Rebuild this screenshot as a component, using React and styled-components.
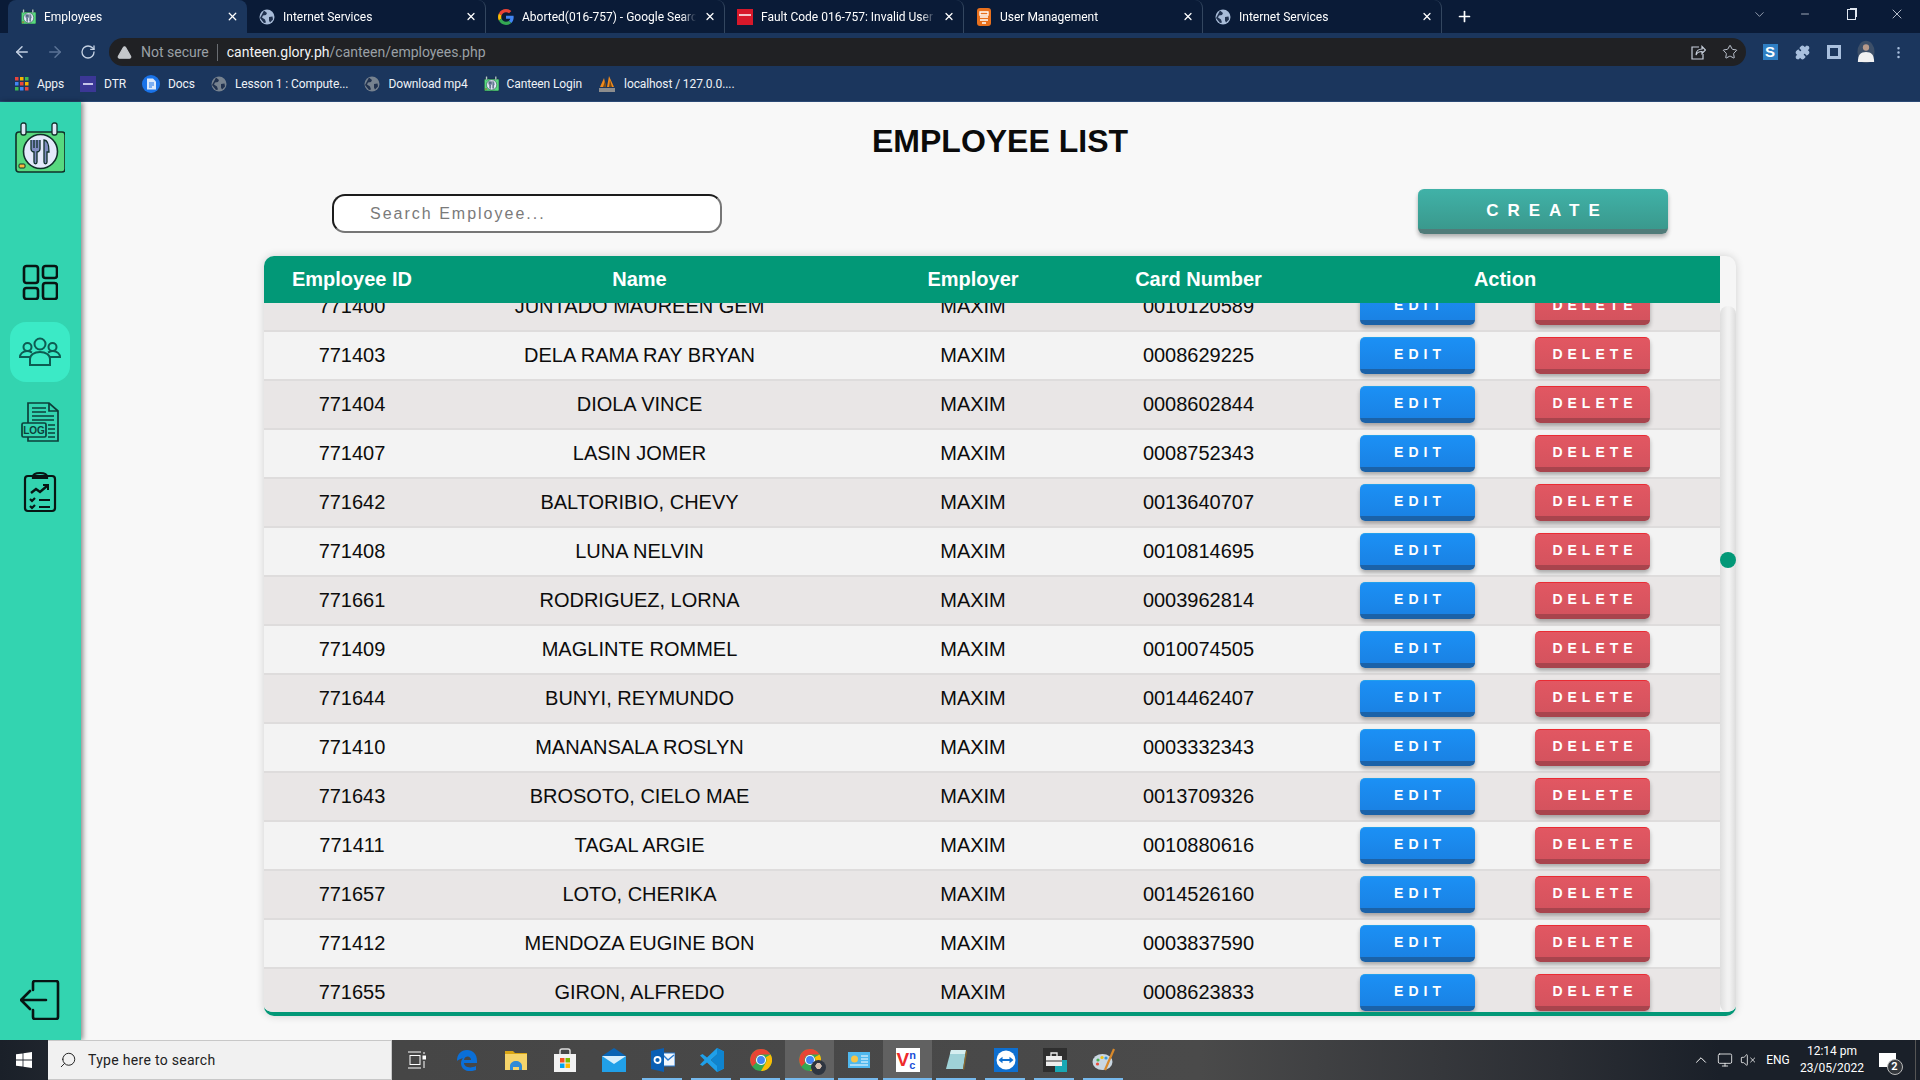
import React from 'react';
import styled, { createGlobalStyle } from 'styled-components';
import { ArrowLeft, ArrowRight, RotateCw, Star, Puzzle, MoreVertical, X, Plus, Minus, ChevronDown, ChevronUp, Monitor, VolumeX, Search, TriangleAlert } from 'lucide-react';

const employees = [
    ['771400', 'JUNTADO MAUREEN GEM', '0010120589'],
    ['771403', 'DELA RAMA RAY BRYAN', '0008629225'],
    ['771404', 'DIOLA VINCE', '0008602844'],
    ['771407', 'LASIN JOMER', '0008752343'],
    ['771642', 'BALTORIBIO, CHEVY', '0013640707'],
    ['771408', 'LUNA NELVIN', '0010814695'],
    ['771661', 'RODRIGUEZ, LORNA', '0003962814'],
    ['771409', 'MAGLINTE ROMMEL', '0010074505'],
    ['771644', 'BUNYI, REYMUNDO', '0014462407'],
    ['771410', 'MANANSALA ROSLYN', '0003332343'],
    ['771643', 'BROSOTO, CIELO MAE', '0013709326'],
    ['771411', 'TAGAL ARGIE', '0010880616'],
    ['771657', 'LOTO, CHERIKA', '0014526160'],
    ['771412', 'MENDOZA EUGINE BON', '0003837590'],
    ['771655', 'GIRON, ALFREDO', '0008623833'],
];

const GlobalStyle = createGlobalStyle`
    html, body { margin: 0; padding: 0; }
    body { font-family: "Liberation Sans", Arial, sans-serif; overflow: hidden; }
    * { box-sizing: border-box; }
`;

/* ---------- little drawings ---------- */

const CanteenLogo = ({ size = 50 }) => (
    <svg width={size} height={size * 1.04} viewBox="0 0 50 52">
        <rect x="1" y="10" width="49" height="40" rx="3" fill="#57d97f" stroke="#10302a" strokeWidth="1.6" />
        <rect x="6" y="1" width="5" height="12" rx="2" fill="#dfe6f5" stroke="#10302a" strokeWidth="1.3" />
        <rect x="37" y="1" width="5" height="12" rx="2" fill="#dfe6f5" stroke="#10302a" strokeWidth="1.3" />
        <circle cx="25.5" cy="29.5" r="17" fill="#e4e9fb" stroke="#10302a" strokeWidth="1.6" />
        <path d="M16 18v9c0 2 2 3 3 3v10c0 2.400 3 2.400 3 0V30c1 0 3-1 3-3v-9M19 18v8M22 18v8" fill="#7f8cc0" stroke="#10302a" strokeWidth="1.3" />
        <path d="M29 18c4 0 5 5 5 12h-2v10c0 2.400-3 2.400-3 0z" fill="#7f8cc0" stroke="#10302a" strokeWidth="1.3" />
        <rect x="4" y="42" width="6" height="4" rx="1" fill="#f6b73c" stroke="#10302a" strokeWidth="1" />
    </svg>
);

const DashboardIcon = () => (
    <svg width="36" height="36" viewBox="0 0 36 36" fill="none" stroke="#071513" strokeWidth="2.600">
        <rect x="2" y="2" width="14" height="17" rx="2.500" />
        <rect x="21" y="2" width="14" height="12" rx="2.500" />
        <rect x="2" y="24" width="14" height="11" rx="2.500" />
        <rect x="21" y="19" width="14" height="16" rx="2.500" />
    </svg>
);

const PeopleIcon = () => (
    <svg width="42" height="30" viewBox="0 0 42 30" fill="none" stroke="#0d5c52" strokeWidth="2">
        <circle cx="21" cy="7" r="5.500" />
        <circle cx="8.500" cy="10" r="4" />
        <circle cx="33.500" cy="10" r="4" />
        <path d="M11 28v-6c0-4 4-7 10-7s10 3 10 7v6z" />
        <path d="M11 20H1c0-3 3-6 7-6 2 0 3 .500 5 1.500M31 20h10c0-3-3-6-7-6-2 0-3 .500-5 1.500" />
    </svg>
);

const LogIcon = () => (
    <svg width="38" height="42" viewBox="0 0 38 42" fill="none" stroke="#0d3f3a" strokeWidth="1.700">
        <path d="M7 22V2h21l9 8v30H7v-4" />
        <path d="M28 2v8h9" />
        <path d="M11 7h14M11 11h14M11 15h22M11 19h22M27 24h7M27 28h7M27 32h7M27 36h7" />
        <rect x="1" y="22" width="24" height="14" rx="1.500" />
        <text x="13" y="33" textAnchor="middle" fontFamily="Liberation Sans, sans-serif" fontWeight="700" fontSize="10" fill="#0d3f3a" stroke="none">LOG</text>
    </svg>
);

const ClipboardIcon = () => (
    <svg width="34" height="42" viewBox="0 0 34 42" fill="none" stroke="#071513" strokeWidth="2.200">
        <rect x="2" y="5" width="30" height="35" rx="3" />
        <path d="M10 6c0-3 3-4 7-4s7 1 7 4v1H10z" />
        <path d="M8 22l5-4 4 3 7-6" strokeWidth="2.400" />
        <path d="M20 14h5v5" strokeWidth="2" />
        <path d="M7 28l2 2 3-3M7 35l2 2 3-3M16 29h11M16 36h11" />
    </svg>
);

const LogoutIcon = () => (
    <svg width="40" height="40" viewBox="0 0 40 40" fill="none" stroke="#071513" strokeWidth="2.600" strokeLinecap="round" strokeLinejoin="round">
        <path d="M13 10V3a2 2 0 0 1 2-2h21a2 2 0 0 1 2 2v34a2 2 0 0 1-2 2H15a2 2 0 0 1-2-2v-7" />
        <path d="M26 20H2M10 11l-9 9 9 9" />
    </svg>
);

const Globe = ({ color = '#a9bcd8' }) => (
    <svg width="16" height="16" viewBox="0 0 16 16">
        <circle cx="8" cy="8" r="7.500" fill={color} />
        <path d="M5 1.500l3 2.500-1 2-3 .500-1 2 3 2 1 3-2 .500-4-5zM10 8l3.500-.500.500 3-3 3-1-2z" fill="#21324f" />
    </svg>
);

const GoogleG = () => (
    <svg width="16" height="16" viewBox="0 0 48 48">
        <path fill="#EA4335" d="M24 9.500c3.540 0 6.710 1.220 9.210 3.600l6.850-6.850C35.900 2.380 30.470 0 24 0 14.620 0 6.510 5.380 2.560 13.220l7.980 6.190C12.430 13.720 17.740 9.500 24 9.500z" />
        <path fill="#4285F4" d="M46.980 24.550c0-1.570-.15-3.090-.38-4.550H24v9.020h12.940c-.58 2.960-2.260 5.480-4.780 7.180l7.730 6c4.510-4.180 7.090-10.360 7.090-17.650z" />
        <path fill="#FBBC05" d="M10.530 28.590c-.48-1.450-.76-2.990-.76-4.590s.27-3.140.76-4.590l-7.980-6.190C.92 16.460 0 20.120 0 24c0 3.880.92 7.540 2.560 10.780l7.970-6.190z" />
        <path fill="#34A853" d="M24 48c6.480 0 11.930-2.130 15.890-5.810l-7.730-6c-2.150 1.450-4.920 2.300-8.160 2.300-6.260 0-11.570-4.220-13.470-9.910l-7.980 6.190C6.510 42.620 14.620 48 24 48z" />
    </svg>
);

const XeroxFav = () => (
    <svg width="16" height="16" viewBox="0 0 16 16">
        <rect width="16" height="16" fill="#d7182a" />
        <rect x="2" y="5" width="12" height="2" fill="#f4c3c8" />
    </svg>
);

const OrangeDocFav = () => (
    <svg width="16" height="18" viewBox="0 0 16 18">
        <rect x="1" y="0" width="14" height="18" rx="3" fill="#e8701d" />
        <path d="M4 4h8v3H4zM4 9h8M4 12h8M6 15h4" stroke="#fff" strokeWidth="1.300" fill="none" />
    </svg>
);

const AppsGrid = () => {
    const colors = ['#e8453c', '#f4b400', '#3cba54', '#4285f4', '#e8453c', '#f4b400', '#3cba54', '#4285f4', '#e8453c'];
    return (
        <svg width="14" height="14" viewBox="0 0 14 14">
            {colors.map((c, i) => <rect key={i} x={(i % 3) * 5} y={Math.floor(i / 3) * 5} width="3.500" height="3.500" fill={c} />)}
        </svg>
    );
};

const DtrFav = () => (
    <svg width="16" height="16" viewBox="0 0 16 16">
        <rect width="16" height="16" fill="#3b3796" />
        <rect x="3" y="7" width="10" height="2" fill="#c6c4ea" />
    </svg>
);

const DocsFav = () => (
    <svg width="18" height="18" viewBox="0 0 18 18">
        <circle cx="9" cy="9" r="9" fill="#1a73e8" />
        <path d="M5 3.500h6l3 3v8H5z" fill="#dce9fb" />
        <path d="M7 8h5M7 10h5M7 12h3" stroke="#1a73e8" strokeWidth="1" />
    </svg>
);

const XamppFav = () => (
    <svg width="18" height="18" viewBox="0 0 18 18">
        <path d="M2 12L6 3l2 9zM9 12l2-11 5 11z" fill="#f08a1d" />
        <path d="M5 12l2-6 1 6zM11 12l1-7 2 7z" fill="#7c4b12" />
        <rect x="1" y="13" width="16" height="4" fill="#8d8d8d" />
    </svg>
);

const ShareIcon = () => (
    <svg width="16" height="16" viewBox="0 0 16 16" fill="none" stroke="#c8d0dc" strokeWidth="1.200">
        <path d="M9 3H2v12h11v-5" />
        <path d="M6 11c0-4 3-6 6-6V2.500L15.500 6 12 9.500V7.500c-3 0-5 1-6 3.500z" />
    </svg>
);

const SidePanelIcon = () => (
    <svg width="14" height="14" viewBox="0 0 14 14" fill="none" stroke="#a9c0de" strokeWidth="3">
        <rect x="1.500" y="1.500" width="11" height="11" />
    </svg>
);

const Avatar = () => (
    <svg width="18" height="26" viewBox="0 0 20 26">
        <ellipse cx="10" cy="13" rx="9.500" ry="12.500" fill="#3d4f68" />
        <circle cx="10" cy="8" r="3.500" fill="#b89a8a" />
        <path d="M1 24c0-8 3-11 9-11s9 3 9 11z" fill="#f1f1f1" />
    </svg>
);

const WindowsLogo = () => (
    <svg width="16" height="16" viewBox="0 0 16 16" fill="#fff">
        <path d="M0 2.300l6.600-.9v6.200H0zM7.400 1.300L16 0v7.600H7.400zM0 8.400h6.600v6.200L0 13.700zM7.400 8.400H16V16l-8.600-1.200z" />
    </svg>
);

const TaskViewIcon = () => (
    <svg width="18" height="18" viewBox="0 0 18 18" fill="none" stroke="#fff" strokeWidth="1">
        <path d="M0 1h13M0 17h13" />
        <rect x="2" y="4.500" width="10" height="9" />
        <rect x="15" y="5" width="2.500" height="3" fill="#fff" />
        <path d="M16 1v2M16 10v7" />
    </svg>
);

const EdgeIcon = () => (
    <svg width="22" height="22" viewBox="0 0 22 22" fill="none">
        <path d="M1 12C1 5 5 1 11 1c6 0 10 4 10 11v2H8c0 4 6 6 12 3v4c-8 3-15 0-15-7 0-2 1-4 2-5-3 1-5 2-6 3zm7-1h7c0-4-6-5-7 0z" fill="#0a6fd8" fillRule="evenodd" />
    </svg>
);

const FolderIcon = () => (
    <svg width="22" height="20" viewBox="0 0 22 20">
        <path d="M0 1h8l2 2h12v3H0z" fill="#d9a514" />
        <rect y="4" width="22" height="16" fill="#f5d46a" />
        <path d="M5 20v-4c0-3 3-5 6-5s6 2 6 5v4h-3v-3H8v3z" fill="#2f8ad6" />
    </svg>
);

const StoreIcon = () => (
    <svg width="24" height="24" viewBox="0 0 24 24">
        <path d="M7 7V3c0-1 1-2 2-2h6c1 0 2 1 2 2v4" fill="none" stroke="#ddd" strokeWidth="1.500" />
        <rect x="1" y="6" width="22" height="18" fill="#f2f2f2" />
        <rect x="7" y="10" width="4.500" height="4.500" fill="#f25022" />
        <rect x="12.500" y="10" width="4.500" height="4.500" fill="#7fba00" />
        <rect x="7" y="15.500" width="4.500" height="4.500" fill="#00a4ef" />
        <rect x="12.500" y="15.500" width="4.500" height="4.500" fill="#ffb900" />
    </svg>
);

const MailIcon = () => (
    <svg width="24" height="24" viewBox="0 0 24 24">
        <path d="M0 8l12-8 12 8v2H0z" fill="#0a64b4" />
        <rect y="8" width="24" height="16" fill="#21a0e8" />
        <path d="M0 8h24L12 16z" fill="#d8effc" />
    </svg>
);

const OutlookIcon = () => (
    <svg width="24" height="24" viewBox="0 0 24 24">
        <rect x="11" y="5" width="13" height="13" fill="#f2f7fc" stroke="#2a7ad0" />
        <path d="M12 7l5 5 6-5" fill="none" stroke="#2a7ad0" strokeWidth="1.400" />
        <path d="M0 3l13-3v24L0 21z" fill="#0a5fb4" />
        <circle cx="6.500" cy="12" r="3" fill="none" stroke="#fff" strokeWidth="1.800" />
    </svg>
);

const VsCodeIcon = () => (
    <svg width="24" height="24" viewBox="0 0 24 24">
        <path d="M17 0l7 3.500v17L17 24 7 14.500 2.500 18 0 16.500 4.500 12 0 7.500 2.500 6 7 9.500zM17 6.500L11 12l6 5.500z" fill="#1fa0ea" fillRule="evenodd" />
        <path d="M17 0v6.500L11 12l6 5.500V24l7-3.500v-17z" fill="#0f84cf" fillRule="evenodd" />
    </svg>
);

const ChromeIcon = ({ size = 22 }) => (
    <svg width={size} height={size} viewBox="0 0 24 24">
        <circle cx="12" cy="12" r="12" fill="#34a853" />
        <path d="M12 0a12 12 0 0 1 10.400 6H12a6 6 0 0 0-5.200 3L3.300 3.500A12 12 0 0 1 12 0z" fill="#ea4335" />
        <path d="M22.400 6A12 12 0 0 1 12 24l5.200-9A6 6 0 0 0 17.200 9z" fill="#fbbc05" />
        <path d="M3.300 3.500L6.800 9a6 6 0 0 0 0 6l-4.200 4A12 12 0 0 1 3.300 3.500z" fill="#ea4335" />
        <circle cx="12" cy="12" r="5.500" fill="#fff" />
        <circle cx="12" cy="12" r="4.300" fill="#4285f4" />
    </svg>
);

const ChromeProfileIcon = () => (
    <TaskAvatar>
        <ChromeIcon />
        <ProfileBadge />
    </TaskAvatar>
);

const PanelIcon = () => (
    <svg width="22" height="16" viewBox="0 0 22 16">
        <rect width="22" height="16" fill="#4fb8ee" />
        <circle cx="6.500" cy="7" r="3.500" fill="#f6c445" />
        <path d="M13 4h7M13 7h7M13 10h7M2 13h18" stroke="#fff" strokeWidth="1" />
    </svg>
);

const VncIcon = () => (
    <VncTile>
        <VncV>V</VncV>
        <VncText>n<br />c</VncText>
    </VncTile>
);

const NotepadIcon = () => (
    <svg width="24" height="24" viewBox="0 0 24 24">
        <path d="M6 2h15l-3 19H1z" fill="#9fd2d8" />
        <path d="M6 2h15l-1 4H5z" fill="#d5eef0" />
        <path d="M21 2l1 2-3 18-1-1z" fill="#8d6b2c" />
    </svg>
);

const TeamViewerIcon = () => (
    <svg width="24" height="24" viewBox="0 0 24 24">
        <rect width="24" height="24" fill="#0e6fd0" />
        <circle cx="12" cy="12" r="9.500" fill="#fff" />
        <path d="M4.500 12l4-3.200v2.200h7V8.800l4 3.200-4 3.200V13h-7v2.200z" fill="#0e6fd0" />
    </svg>
);

const ToolboxIcon = () => (
    <svg width="24" height="24" viewBox="0 0 24 24">
        <rect width="24" height="24" fill="#2f2f2f" />
        <rect x="12" y="12" width="12" height="12" fill="#18a8b4" />
        <rect x="3" y="8" width="16" height="10" fill="#eee" />
        <path d="M8 8V5h6v3" fill="none" stroke="#eee" strokeWidth="1.300" />
        <path d="M3 13h16" stroke="#2f2f2f" strokeWidth="1" />
    </svg>
);

const PaintIcon = () => (
    <svg width="24" height="24" viewBox="0 0 24 24">
        <ellipse cx="10.500" cy="14" rx="10" ry="8" fill="#c9d7e2" />
        <circle cx="6" cy="12" r="1.600" fill="#4caf50" />
        <circle cx="10" cy="9.500" r="1.600" fill="#f1c40f" />
        <circle cx="5.500" cy="16" r="1.600" fill="#e74c3c" />
        <circle cx="14" cy="10" r="1.600" fill="#3498db" />
        <path d="M22 1l-9 21" stroke="#d8892b" strokeWidth="2.200" />
    </svg>
);

/* ---------- browser chrome ---------- */

const Screen = styled.div`
    width: 1920px;
    height: 1080px;
    display: flex;
    flex-direction: column;
    overflow: hidden;
`;

const TabStrip = styled.div`
    height: 33px;
    background: #0a1b37;
    display: flex;
    padding-left: 8px;
    color: #fff;
    font: 12px Roboto, sans-serif;
`;

const Tab = styled.div`
    position: relative;
    width: 239px;
    height: 33px;
    display: flex;
    align-items: center;
    padding: 0 8px 0 12px;
    gap: 8px;
    background: ${p => (p.$active ? '#1b365d' : 'transparent')};
    border-radius: 8px 8px 0 0;
    border-right: ${p => (p.$active || p.$noLine ? 'none' : '1px solid #33465f')};
    background-clip: ${p => (p.$active ? 'border-box' : 'padding-box')};
`;

const TabFav = styled.span`
    width: 16px;
    display: flex;
    justify-content: center;
    flex: none;
`;

const TabTitle = styled.span`
    flex: none;
    width: 174px;
    white-space: nowrap;
    overflow: hidden;
    mask-image: linear-gradient(to right, #000 92%, transparent);
`;

const NewTab = styled.div`
    width: 28px;
    margin-left: 14px;
    display: flex;
    align-items: center;
`;

const WindowControls = styled.div`
    margin-left: auto;
    display: flex;
`;

const WindowButton = styled.div`
    width: 46px;
    height: 28px;
    display: flex;
    align-items: center;
    justify-content: center;
    color: #dfe6f0;
`;

const RestoreGlyph = styled.span`
    width: 9px;
    height: 11px;
    border: 1px solid #dfe6f0;
    box-shadow: 2px -2px 0 -1px #dfe6f0;
`;

const Toolbar = styled.div`
    height: 35px;
    background: #1b365d;
    display: flex;
    align-items: center;
    padding: 3px 0 0 5px;
`;

const NavButton = styled.div`
    width: 33px;
    display: flex;
    justify-content: center;
    color: ${p => (p.$dim ? '#5b7396' : '#c4d1e3')};
`;

const Omnibox = styled.div`
    margin-left: 5px;
    width: 1637px;
    height: 28px;
    border-radius: 14px;
    background: #202124;
    display: flex;
    align-items: center;
    padding: 0 8px;
    font: 14px Roboto, sans-serif;
    color: #9aa0a6;
`;

const NotSecure = styled.span`
    margin-left: 9px;
    padding-right: 8px;
    border-right: 1px solid #6a6d72;
    line-height: 17px;
`;

const Host = styled.span`
    margin-left: 9px;
    color: #f1f3f4;
`;

const OmniActions = styled.div`
    margin-left: auto;
    display: flex;
    gap: 16px;
    color: #c8d0dc;
    padding-right: 0;
`;

const ExtensionRow = styled.div`
    display: flex;
    align-items: center;
    padding-left: 8px;
`;

const ExtensionSlot = styled.div`
    width: 32px;
    display: flex;
    justify-content: center;
    color: #a9c0de;
`;

const SExtension = styled.span`
    width: 15px;
    height: 16px;
    background: #2f7fc4;
    color: #fff;
    font: 700 15px/16px "Liberation Sans", sans-serif;
    text-align: center;
`;

const BookmarkBar = styled.div`
    height: 34px;
    background: #1b365d;
    display: flex;
    align-items: center;
    padding: 0 0 1px 15px;
    gap: 16px;
    color: #eef2f7;
    font: 12px Roboto, sans-serif;
    letter-spacing: -0.1px;
    border-bottom: 1px solid #2b4a75;
`;

const Bookmark = styled.div`
    display: flex;
    align-items: center;
    gap: 8px;
`;

/* ---------- page ---------- */

const Body = styled.div`
    flex: 1;
    min-height: 0;
    display: flex;
`;

const Sidebar = styled.nav`
    width: 81px;
    flex: none;
    padding-right: 1px;
    background: #33d4b0;
    box-shadow: 2px 0 5px rgba(0, 0, 0, 0.45);
    display: flex;
    flex-direction: column;
    align-items: center;
    position: relative;
    z-index: 2;
`;

const LogoSlot = styled.div`
    margin: 20px 0 80px;
    height: 50px;
`;

const NavList = styled.div`
    display: flex;
    flex-direction: column;
    gap: 10px;
`;

const NavItem = styled.div`
    width: 60px;
    height: 60px;
    border-radius: 16px;
    display: flex;
    align-items: center;
    justify-content: center;
    background: ${p => (p.$active ? '#3beac6' : 'transparent')};
`;

const LogoutItem = styled(NavItem)`
    margin-top: auto;
    margin-bottom: 10px;
`;

const Main = styled.main`
    flex: 1;
    background: #f8f8f8;
    padding: 20px 184px 0 183px;
    display: flex;
    flex-direction: column;
`;

const Title = styled.h1`
    margin: 0;
    height: 38px;
    line-height: 38px;
    font-size: 32px;
    font-weight: 700;
    text-align: center;
    color: #0b0b0b;
`;

const Controls = styled.div`
    margin-top: 29px;
    height: 45px;
    padding: 0 68px;
    display: flex;
    align-items: flex-start;
    justify-content: space-between;
`;

const SearchInput = styled.input`
    width: 390px;
    height: 39px;
    margin-top: 5px;
    padding: 0 36px;
    border: 2px solid;
    border-color: #1c1c1c #767676 #767676 #1c1c1c;
    border-radius: 13px;
    background: #fff;
    font: 16px "Liberation Sans", sans-serif;
    letter-spacing: 2px;
    outline: none;
    &::placeholder { color: #7a7a7a; opacity: 1; }
`;

const PushButton = styled.button`
    font: 700 14px "Liberation Sans", sans-serif;
    letter-spacing: 5px;
    color: #fff;
    border: none;
    border-bottom: 5px solid ${p => p.$edge};
    border-top: 1px solid ${p => p.$top};
    border-radius: 5px;
    background: ${p => p.$bg};
    box-shadow: 0 3px 4px rgba(0, 0, 0, 0.3);
    padding: 0 0 0 5px;
`;

const CreateButton = styled(PushButton)`
    width: 250px;
    height: 45px;
    font-size: 17px;
    letter-spacing: 9px;
    padding: 2px 0 0 9px;
    border-radius: 6px;
`;

const RowButton = styled(PushButton)`
    width: 115px;
    height: 37px;
`;

const Card = styled.section`
    margin-top: 22px;
    height: 760px;
    display: flex;
    border-radius: 10px;
    border-bottom: 4px solid #029877;
    background: #f6f6f6;
    box-shadow: 0 0 9px rgba(0, 0, 0, 0.16);
    overflow: hidden;
`;

const TableArea = styled.div`
    width: 1456px;
    flex: none;
    display: flex;
    flex-direction: column;
    min-height: 0;
`;

const columns = '176px 399px 268px 183px 430px';

const HeadRow = styled.div`
    height: 47px;
    flex: none;
    display: grid;
    grid-template-columns: ${columns};
    align-items: center;
    background: #029877;
    color: #fff;
    font-size: 20px;
    font-weight: 700;
    text-align: center;
    position: relative;
    z-index: 1;
`;

const RowsViewport = styled.div`
    flex: 1;
    min-height: 0;
    overflow: hidden;
`;

const RowsList = styled.div`
    margin-top: -20px;
`;

const Row = styled.div`
    height: 49px;
    display: grid;
    grid-template-columns: ${columns};
    align-items: center;
    text-align: center;
    font-size: 20px;
    color: #0c0c0c;
    background: ${p => (p.$alt ? '#e9e6e6' : '#f3f3f3')};
    border-bottom: 2px solid #dedcdc;
`;

const ActionCell = styled.div`
    display: flex;
    gap: 60px;
    padding-left: 70px;
`;

const ScrollTrack = styled.div`
    position: relative;
    width: 16px;
    margin-top: 50px;
    border-radius: 8px;
    background: linear-gradient(to right, #dedede, #f2f2f2 45%, #f2f2f2 60%, #dcdcdc);
`;

const ScrollThumb = styled.div`
    position: absolute;
    left: 0;
    top: 246px;
    width: 16px;
    height: 16px;
    border-radius: 50%;
    background: #029877;
`;

/* ---------- taskbar ---------- */

const Taskbar = styled.footer`
    height: 40px;
    flex: none;
    display: flex;
    position: relative;
    z-index: 3;
    background: linear-gradient(to right, #1a2029 0, #464646 400px, #4a4a4a 1200px, #2b2e34 1560px, #1a2029 1720px);
    color: #fff;
    font: 12px Roboto, sans-serif;
`;

const StartButton = styled.div`
    width: 48px;
    display: flex;
    align-items: center;
    justify-content: center;
`;

const TaskSearch = styled.div`
    width: 344px;
    background: #f1f1f1;
    border: 1px solid #c8c8c8;
    border-width: 1px 1px 1px 0;
    display: flex;
    align-items: center;
    gap: 11px;
    padding-left: 11px;
    color: #222;
    font-size: 14px;
    letter-spacing: 0.3px;
`;

const TaskCell = styled.div`
    position: relative;
    width: ${p => p.$w || 49}px;
    display: flex;
    align-items: center;
    justify-content: center;
    background: ${p => (p.$active ? '#616161' : 'transparent')};
    &::after {
        content: '';
        display: ${p => (p.$running ? 'block' : 'none')};
        position: absolute;
        bottom: 0;
        height: 2px;
        left: ${p => (p.$active ? '0' : '4px')};
        right: ${p => (p.$active ? '0' : '5px')};
        background: #76b9ed;
    }
`;

const TaskAvatar = styled.span`
    position: relative;
    display: flex;
`;

const ProfileBadge = styled.span`
    position: absolute;
    right: -5px;
    bottom: -4px;
    width: 15px;
    height: 15px;
    border-radius: 50%;
    background: radial-gradient(circle at 50% 40%, #d7c0b0 25%, #2e3540 28%);
`;

const VncTile = styled.span`
    width: 24px;
    height: 24px;
    background: #fff;
    display: flex;
    align-items: center;
    padding-left: 1px;
`;

const VncV = styled.span`
    color: #ee2a2a;
    font: 700 19px/24px "Liberation Sans", sans-serif;
`;

const VncText = styled.span`
    color: #1b4fd8;
    font: 700 11px/10px "Liberation Sans", sans-serif;
`;

const Tray = styled.div`
    margin-left: auto;
    display: flex;
    align-items: center;
`;

const TraySlot = styled.div`
    width: ${p => p.$w}px;
    display: flex;
    flex-direction: column;
    align-items: center;
    justify-content: center;
    line-height: 17px;
`;

const NotifyGlyph = styled.span`
    position: relative;
    width: 17px;
    height: 14px;
    background: #fff;
`;

const NotifyCount = styled.span`
    position: absolute;
    left: 8px;
    top: 6px;
    width: 16px;
    height: 16px;
    border-radius: 50%;
    background: #33373c;
    border: 1px solid #bbb;
    font: 700 11px/14px Roboto, sans-serif;
    text-align: center;
`;

const DesktopEdge = styled.div`
    width: 5px;
    height: 100%;
    margin-left: 8px;
    border-left: 1px solid #555;
`;

const tabs = [
    { title: 'Employees', icon: <CanteenLogo size={15} />, active: true },
    { title: 'Internet Services', icon: <Globe /> },
    { title: 'Aborted(016-757) - Google Search', icon: <GoogleG /> },
    { title: 'Fault Code 016-757: Invalid User', icon: <XeroxFav /> },
    { title: 'User Management', icon: <OrangeDocFav /> },
    { title: 'Internet Services', icon: <Globe /> },
];

const bookmarks = [
    { label: 'Apps', icon: <AppsGrid /> },
    { label: 'DTR', icon: <DtrFav /> },
    { label: 'Docs', icon: <DocsFav /> },
    { label: 'Lesson 1 : Compute...', icon: <Globe color="#76828f" /> },
    { label: 'Download mp4', icon: <Globe color="#76828f" /> },
    { label: 'Canteen Login', icon: <CanteenLogo size={15} /> },
    { label: 'localhost / 127.0.0....', icon: <XamppFav /> },
];

const taskApps = [
    { icon: <EdgeIcon /> },
    { icon: <FolderIcon /> },
    { icon: <StoreIcon /> },
    { icon: <MailIcon /> },
    { icon: <OutlookIcon />, running: true },
    { icon: <VsCodeIcon />, running: true },
    { icon: <ChromeIcon />, running: true },
    { icon: <ChromeProfileIcon />, running: true, active: true },
    { icon: <PanelIcon />, running: true },
    { icon: <VncIcon />, running: true, active: true },
    { icon: <NotepadIcon />, running: true },
    { icon: <TeamViewerIcon />, running: true },
    { icon: <ToolboxIcon />, running: true },
    { icon: <PaintIcon />, running: true },
];

export default function App() {
    return (
        <Screen>
            <GlobalStyle />
            <TabStrip>
                {tabs.map((t, i) => (
                    <Tab key={i} $active={t.active} $noLine={i === 0}>
                        <TabFav>{t.icon}</TabFav>
                        <TabTitle>{t.title}</TabTitle>
                        <X size={13} strokeWidth={2.4} color="#fff" />
                    </Tab>
                ))}
                <NewTab><Plus size={17} strokeWidth={2.4} color="#fff" /></NewTab>
                <WindowControls>
                    <WindowButton><ChevronDown size={15} strokeWidth={1} /></WindowButton>
                    <WindowButton><Minus size={12} strokeWidth={1.400} /></WindowButton>
                    <WindowButton><RestoreGlyph /></WindowButton>
                    <WindowButton><X size={16} strokeWidth={1.200} /></WindowButton>
                </WindowControls>
            </TabStrip>

            <Toolbar>
                <NavButton><ArrowLeft size={18} /></NavButton>
                <NavButton $dim><ArrowRight size={18} /></NavButton>
                <NavButton><RotateCw size={16} /></NavButton>
                <Omnibox>
                    <TriangleAlert size={15} fill="#c4c7cb" color="#c4c7cb" />
                    <NotSecure>Not secure</NotSecure>
                    <Host>canteen.glory.ph</Host>
                    <span>/canteen/employees.php</span>
                    <OmniActions>
                        <ShareIcon />
                        <Star size={16} strokeWidth={1.400} />
                    </OmniActions>
                </Omnibox>
                <ExtensionRow>
                    <ExtensionSlot><SExtension>S</SExtension></ExtensionSlot>
                    <ExtensionSlot><Puzzle size={15} fill="#a9c0de" /></ExtensionSlot>
                    <ExtensionSlot><SidePanelIcon /></ExtensionSlot>
                    <ExtensionSlot><Avatar /></ExtensionSlot>
                    <ExtensionSlot><MoreVertical size={15} /></ExtensionSlot>
                </ExtensionRow>
            </Toolbar>

            <BookmarkBar>
                {bookmarks.map(b => (
                    <Bookmark key={b.label}>{b.icon}{b.label}</Bookmark>
                ))}
            </BookmarkBar>

            <Body>
                <Sidebar>
                    <LogoSlot><CanteenLogo /></LogoSlot>
                    <NavList>
                        <NavItem><DashboardIcon /></NavItem>
                        <NavItem $active><PeopleIcon /></NavItem>
                        <NavItem><LogIcon /></NavItem>
                        <NavItem><ClipboardIcon /></NavItem>
                    </NavList>
                    <LogoutItem><LogoutIcon /></LogoutItem>
                </Sidebar>

                <Main>
                    <Title>EMPLOYEE LIST</Title>
                    <Controls>
                        <SearchInput placeholder="Search Employee..." />
                        <CreateButton $bg="linear-gradient(#40b1a7, #3a998d)" $edge="#517b79" $top="#40b1a7">CREATE</CreateButton>
                    </Controls>
                    <Card>
                        <TableArea>
                            <HeadRow>
                                <span>Employee ID</span>
                                <span>Name</span>
                                <span>Employer</span>
                                <span>Card Number</span>
                                <span>Action</span>
                            </HeadRow>
                            <RowsViewport>
                                <RowsList>
                                    {employees.map(([id, name, card], i) => (
                                        <Row key={id} $alt={i % 2 === 0}>
                                            <span>{id}</span>
                                            <span>{name}</span>
                                            <span>MAXIM</span>
                                            <span>{card}</span>
                                            <ActionCell>
                                                <RowButton $bg="linear-gradient(#1b90f5, #1a82e4)" $edge="#1b62a8" $top="#22a0ee">EDIT</RowButton>
                                                <RowButton $bg="linear-gradient(#e25762, #d4535e)" $edge="#a8444d" $top="#ea2b33">DELETE</RowButton>
                                            </ActionCell>
                                        </Row>
                                    ))}
                                </RowsList>
                            </RowsViewport>
                        </TableArea>
                        <ScrollTrack><ScrollThumb /></ScrollTrack>
                    </Card>
                </Main>
            </Body>

            <Taskbar>
                <StartButton><WindowsLogo /></StartButton>
                <TaskSearch>
                    <Search size={18} strokeWidth={1.300} style={{ transform: 'scaleX(-1)' }} />
                    Type here to search
                </TaskSearch>
                <TaskCell $w={50}><TaskViewIcon /></TaskCell>
                {taskApps.map((a, i) => (
                    <TaskCell key={i} $running={a.running} $active={a.active}>{a.icon}</TaskCell>
                ))}
                <Tray>
                    <TraySlot $w={24}><ChevronUp size={18} strokeWidth={1.300} /></TraySlot>
                    <TraySlot $w={24}><Monitor size={16} strokeWidth={1.200} /></TraySlot>
                    <TraySlot $w={22}><VolumeX size={16} strokeWidth={1.200} /></TraySlot>
                    <TraySlot $w={38}>ENG</TraySlot>
                    <TraySlot $w={70}>
                        <span>12:14 pm</span>
                        <span>23/05/2022</span>
                    </TraySlot>
                    <TraySlot $w={40}><NotifyGlyph><NotifyCount>2</NotifyCount></NotifyGlyph></TraySlot>
                    <DesktopEdge />
                </Tray>
            </Taskbar>
        </Screen>
    );
}
